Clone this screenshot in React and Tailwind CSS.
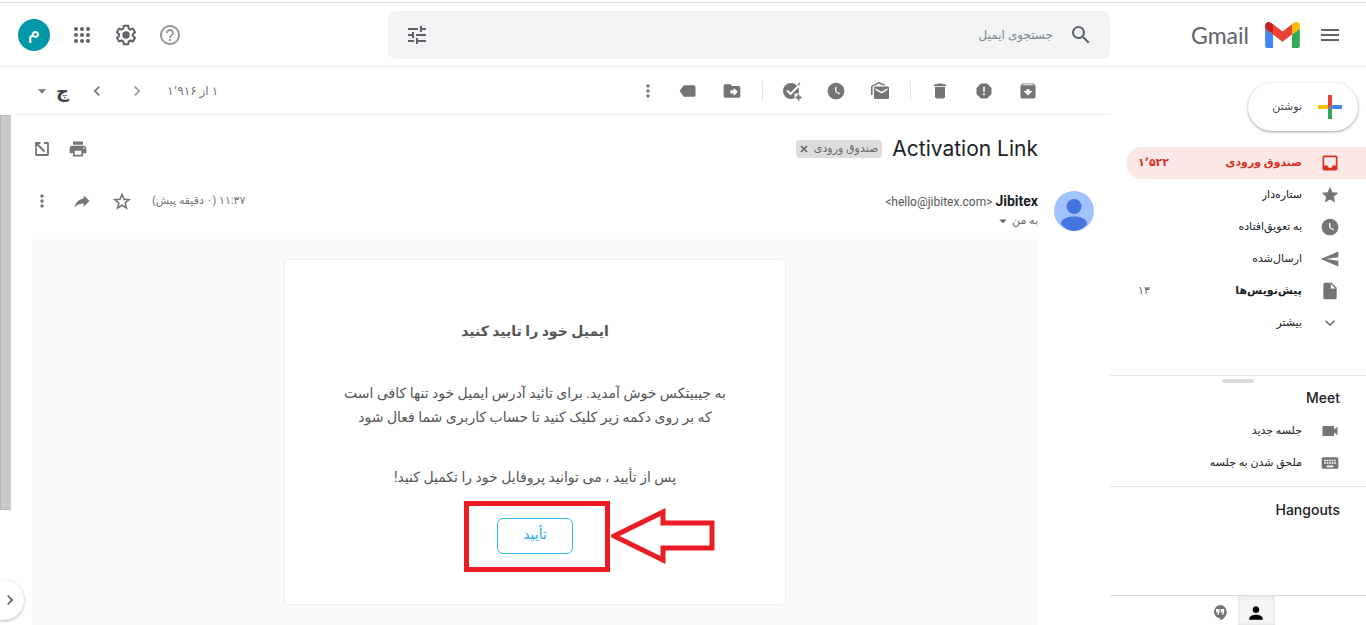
import { useState } from 'react'
import clsx from 'clsx'
import {
  MdArchive,
  MdArrowDropDown,
  MdChevronLeft,
  MdChevronRight,
  MdDelete,
  MdDriveFileMove,
  MdExpandMore,
  MdHelpOutline,
  MdInbox,
  MdInsertDriveFile,
  MdKeyboard,
  MdLabel,
  MdMenu,
  MdMoreVert,
  MdPerson,
  MdPrint,
  MdReply,
  MdReport,
  MdSearch,
  MdSend,
  MdStar,
  MdTune,
  MdVideocam,
  MdWatchLater,
} from 'react-icons/md'

const FOLDERS = [
  { id: 'inbox', icon: MdInbox, label: 'صندوق ورودی', count: '۱٬۵۲۲' },
  { id: 'starred', icon: MdStar, label: 'ستاره‌دار' },
  { id: 'snoozed', icon: MdWatchLater, label: 'به تعویق‌افتاده' },
  { id: 'sent', icon: MdSend, label: 'ارسال‌شده', flip: true },
  { id: 'drafts', icon: MdInsertDriveFile, label: 'پیش‌نویس‌ها', count: '۱۳', bold: true },
  { id: 'more', icon: MdExpandMore, label: 'بیشتر' },
]

const MEET_LINKS = [
  { icon: MdVideocam, label: 'جلسه جدید' },
  { icon: MdKeyboard, label: 'ملحق شدن به جلسه' },
]

const TOOL_GROUPS = [
  [
    { icon: MdArchive, label: 'بایگانی' },
    { icon: MdReport, label: 'گزارش هرزنامه' },
    { icon: MdDelete, label: 'حذف' },
  ],
  [
    { icon: UnreadIcon, label: 'خوانده‌نشده' },
    { icon: MdWatchLater, label: 'تعویق' },
    { icon: AddTaskIcon, label: 'افزودن به کارها' },
  ],
  [
    { icon: MdDriveFileMove, label: 'انتقال' },
    { icon: MdLabel, label: 'برچسب', flip: true },
  ],
]

function GmailMark() {
  return (
    <svg width="35" height="26" viewBox="52 42 88 66" aria-hidden="true">
      <path fill="#4285f4" d="M58 108h14V74L52 59v43c0 3.32 2.69 6 6 6" />
      <path fill="#34a853" d="M120 108h14c3.32 0 6-2.69 6-6V59l-20 15" />
      <path fill="#fbbc04" d="M120 48v26l20-15v-8c0-7.42-8.47-11.65-14.4-7.2" />
      <path fill="#ea4335" d="M72 74V48l24 18 24-18v26L96 92" />
      <path fill="#c5221f" d="M52 51v8l20 15V48l-5.6-4.2c-5.94-4.45-14.4-.22-14.4 7.2" />
    </svg>
  )
}

function GearIcon() {
  return (
    <svg width="24" height="24" viewBox="0 0 24 24" fill="currentColor" aria-hidden="true">
      <path d="M13.85 22.25h-3.7c-.74 0-1.36-.54-1.45-1.27l-.27-1.89c-.27-.14-.53-.29-.79-.46l-1.8.72c-.7.26-1.47-.03-1.81-.65L2.2 15.53c-.35-.66-.2-1.44.36-1.88l1.53-1.19c-.01-.15-.02-.3-.02-.46 0-.15.01-.31.02-.46l-1.52-1.19c-.59-.45-.74-1.26-.37-1.88l1.85-3.19c.34-.62 1.11-.9 1.79-.63l1.81.73c.26-.17.52-.32.78-.46l.27-1.91c.09-.7.71-1.25 1.44-1.25h3.7c.74 0 1.36.54 1.45 1.27l.27 1.89c.27.14.53.29.79.46l1.8-.72c.71-.26 1.48.03 1.82.65l1.84 3.18c.36.66.2 1.44-.36 1.88l-1.52 1.19c.01.15.02.3.02.46s-.01.31-.02.46l1.52 1.19c.56.45.72 1.23.37 1.86l-1.86 3.22c-.34.62-1.11.9-1.8.63l-1.8-.72c-.26.17-.52.32-.78.46l-.27 1.91c-.1.68-.72 1.22-1.46 1.22zm-3.23-2h2.76l.37-2.55.53-.22c.44-.18.88-.44 1.34-.78l.45-.34 2.38.96 1.38-2.4-2.03-1.58.07-.56c.03-.26.06-.51.06-.78s-.03-.53-.06-.78l-.07-.56 2.03-1.58-1.39-2.4-2.39.96-.45-.35c-.42-.32-.87-.58-1.33-.77l-.52-.22-.37-2.55h-2.76l-.37 2.55-.53.21c-.44.19-.88.44-1.34.79l-.45.33-2.38-.95-1.39 2.39 2.03 1.58-.07.56a7 7 0 0 0-.06.79c0 .26.02.53.06.78l.07.56-2.03 1.58 1.38 2.4 2.39-.96.45.35c.43.33.86.58 1.33.77l.53.22.38 2.55z" />
      <circle cx="12" cy="12" r="3.7" />
    </svg>
  )
}

function AppsIcon() {
  const stops = [6, 12, 18]
  return (
    <svg width="24" height="24" viewBox="0 0 24 24" fill="currentColor" aria-hidden="true">
      {stops.map(y => stops.map(x => <circle key={`${x}-${y}`} cx={x} cy={y} r="2" />))}
    </svg>
  )
}

function UnreadIcon({ size = 20 }) {
  return (
    <svg width={size} height={size} viewBox="0 0 20 20" fill="currentColor" aria-hidden="true">
      <path d="M1 14V5.6c0-.6.3-1 .9-1.200L9 1l7.500 3.200H12.500L9 2.700 2.600 5.400V14z" />
      <path
        fillRule="evenodd"
        d="M5.200 5.500h12.600c.7 0 1.200.5 1.200 1.200v10.100c0 .7-.5 1.200-1.200 1.200H5.200c-.7 0-1.200-.5-1.200-1.200V6.700c0-.7.5-1.200 1.200-1.200zM5.500 7.300V9l6 3.500 6-3.500V7.300l-6 3.500z"
      />
    </svg>
  )
}

function AddTaskIcon({ size = 20 }) {
  return (
    <svg width={size} height={size} viewBox="0 0 20 20" aria-hidden="true">
      <circle cx="9" cy="10" r="8" fill="currentColor" />
      <path d="M5 9.500l3.500 3.500L18 3.500" fill="none" stroke="white" strokeWidth="2" />
      <path d="M16 4l2-2" stroke="currentColor" strokeWidth="1.500" />
      <path d="M12.500 12.500H20V20h-7.500z" fill="white" />
      <path d="M16.500 13.500v6M13.500 16.500h6" stroke="currentColor" strokeWidth="1.800" />
    </svg>
  )
}

function PopOutIcon() {
  return (
    <svg width="20" height="20" viewBox="0 0 20 20" fill="none" stroke="currentColor" strokeWidth="1.800" aria-hidden="true">
      <path d="M4 9v6.500c0 .3.200.5.500.5h11c.3 0 .5-.2.500-.5v-11c0-.3-.2-.5-.5-.5H12" />
      <path d="M4 8.500V4h4.500M4.500 4.500l8 8" />
    </svg>
  )
}

function StarOutlineIcon() {
  return (
    <svg width="20" height="20" viewBox="0 0 20 20" fill="none" stroke="currentColor" strokeWidth="1.600" aria-hidden="true">
      <path d="M10 3.500l2 4.700 5.100.4-3.900 3.400 1.200 5-4.400-2.700L5.600 17l1.200-5-3.900-3.400 5.100-.4z" />
    </svg>
  )
}

function CloseIcon() {
  return (
    <svg width="8" height="8" viewBox="0 0 8 8" fill="none" stroke="currentColor" strokeWidth="1.600" aria-hidden="true">
      <path d="M1 1l6 6M7 1L1 7" />
    </svg>
  )
}

function ComposeIcon() {
  return (
    <svg width="36" height="36" viewBox="0 0 36 36" aria-hidden="true">
      <path fill="#34a853" d="M16 16v14h4V20z" />
      <path fill="#4285f4" d="M30 16H20l-4 4h14z" />
      <path fill="#fbbc05" d="M6 16v4h10l4-4z" />
      <path fill="#ea4335" d="M20 16V6h-4v14z" />
    </svg>
  )
}

function HangoutsIcon() {
  return (
    <svg width="16" height="18" viewBox="0 0 16 18" fill="currentColor" aria-hidden="true">
      <path
        fillRule="evenodd"
        d="M8 1a6.800 6.800 0 0 1 6.800 6.800c0 4-3 7-6.300 8.700v-2H8A6.800 6.800 0 0 1 8 1zM4 5v3.500h2.200L5 10.800h1.500l1-2.300V5zm4.700 0v3.500h2.200l-1.200 2.300h1.500l1-2.300V5z"
      />
    </svg>
  )
}

function SenderAvatar() {
  return (
    <svg className="shrink-0 rounded-full" width="40" height="40" viewBox="0 0 40 40" aria-hidden="true">
      <rect width="40" height="40" fill="#a0c3ff" />
      <circle cx="20" cy="15.500" r="7.500" fill="#4374e0" />
      <path fill="#4374e0" d="M7 33c0-5 6-7.500 13-7.500S33 28 33 33c-3 4-8 7-13 7S10 37 7 33z" />
    </svg>
  )
}

function IconButton({ label, className, children }) {
  return (
    <button type="button" aria-label={label} className={clsx('flex shrink-0 items-center justify-center', className)}>
      {children}
    </button>
  )
}

function Header() {
  return (
    <header className="mt-0.5 flex h-[65px] shrink-0 items-center border-y border-t-[#dadce0] border-b-[#ebebeb] text-[#5f6368]">
      <div className="flex w-64 shrink-0 items-center gap-[18px] ps-6">
        <IconButton label="منو">
          <MdMenu size={24} />
        </IconButton>
        <a href="#inbox" className="flex items-center gap-4 font-['Lato'] text-[23px] leading-8">
          <GmailMark />
          Gmail
        </a>
      </div>

      <form className="flex h-12 max-w-[722px] flex-1 items-center rounded-lg bg-[#f1f3f4] px-[17px]">
        <IconButton label="جستجو">
          <MdSearch size={24} />
        </IconButton>
        <input
          type="search"
          aria-label="جستجوی ایمیل"
          placeholder="جستجوی ایمیل"
          className="mx-4 min-w-0 flex-1 bg-transparent text-xs outline-none placeholder:text-[#80868b]"
        />
        <IconButton label="گزینه‌های جستجو">
          <MdTune size={24} />
        </IconButton>
      </form>

      <div className="ms-auto flex items-center gap-5 pe-[18px]">
        <IconButton label="راهنما" className="text-[#999999]">
          <MdHelpOutline size={24} />
        </IconButton>
        <IconButton label="تنظیمات">
          <GearIcon />
        </IconButton>
        <IconButton label="برنامه‌ها">
          <AppsIcon />
        </IconButton>
        <IconButton label="حساب" className="size-8 rounded-full bg-[#0097a7] pb-2 text-xl leading-5 text-white">
          م
        </IconButton>
      </div>
    </header>
  )
}

function FolderItem({ item, active, onSelect }) {
  return (
    <button
      type="button"
      onClick={() => onSelect(item.id)}
      className={clsx(
        'flex h-8 items-center rounded-e-full ps-[26px] pe-3 text-[11px]',
        active ? 'bg-[#fce8e6] font-bold text-[#d93025]' : 'text-[#202124]',
        item.bold && 'font-bold',
      )}
    >
      <item.icon
        size={20}
        className={clsx('me-[18px] shrink-0', !active && 'text-[#747474]', item.flip && '-scale-x-100')}
      />
      <span className="truncate">{item.label}</span>
      {item.count && <span className={clsx('ms-auto', !active && 'font-normal text-[#5f6368]')}>{item.count}</span>}
    </button>
  )
}

function Sidebar() {
  const [folder, setFolder] = useState('inbox')

  return (
    <aside className="flex w-64 shrink-0 flex-col">
      <div className="px-2 py-4">
        <button
          type="button"
          className="flex h-12 items-center gap-2.5 rounded-full ps-2.5 pe-6 text-[11px] text-[#3c4043] shadow-[0_1px_2px_rgba(60,64,67,0.3),0_1px_3px_1px_rgba(60,64,67,0.15)]"
        >
          <ComposeIcon />
          نوشتن
        </button>
      </div>

      <nav className="flex flex-1 flex-col pe-4">
        {FOLDERS.map(item => (
          <FolderItem key={item.id} item={item} active={item.id === folder} onSelect={setFolder} />
        ))}
      </nav>

      {/* Meet */}
      <section className="flex h-[111px] shrink-0 flex-col border-t border-[#e5e5e5] pt-[3px]">
        <div className="mx-auto h-1 w-8 shrink-0 rounded-full bg-[#dadce0]" />
        <h2 className="px-[26px] pt-[3px] pb-[5px] font-['Inter'] text-sm leading-6 font-medium text-[#202124]">Meet</h2>
        {MEET_LINKS.map(link => (
          <a key={link.label} href="#meet" className="flex h-8 shrink-0 items-center gap-[18px] px-[26px] text-[11px] text-[#202124]">
            <link.icon size={20} className="shrink-0 text-[#747474]" />
            {link.label}
          </a>
        ))}
      </section>

      {/* Hangouts */}
      <section className="h-[109px] shrink-0 border-t border-[#e5e5e5] pt-[11px]">
        <h2 className="px-[26px] font-['Inter'] text-sm leading-6 font-medium text-[#202124]">Hangouts</h2>
      </section>

      <div className="flex h-[30px] shrink-0 justify-center border-t border-[#dadce0]">
        <IconButton label="مخاطبین" className="w-[37px] bg-[#f5f5f5] pt-1 text-black shadow-[inset_0_0_4px_rgba(0,0,0,0.1)]">
          <MdPerson size={20} />
        </IconButton>
        <IconButton label="گفتگوها" className="w-9 pt-1 text-[#747474]">
          <HangoutsIcon />
        </IconButton>
      </div>
    </aside>
  )
}

function Toolbar() {
  return (
    <div className="me-4 flex h-12 shrink-0 items-center border-b border-[#ebebeb] ps-[60px] pe-4 text-[#747474]">
      {TOOL_GROUPS.map((group, i) => (
        <div key={i} className="flex items-center">
          {i > 0 && (
            <span className="flex w-4 justify-center">
              <span className="h-5 w-px bg-[#e5e5e5]" />
            </span>
          )}
          {group.map(tool => (
            <IconButton key={tool.label} label={tool.label} className="w-11">
              <tool.icon size={20} className={clsx(tool.flip && '-scale-x-100')} />
            </IconButton>
          ))}
        </div>
      ))}
      <IconButton label="بیشتر" className="w-9">
        <MdMoreVert size={20} />
      </IconButton>

      <div className="ms-auto flex items-center">
        <span className="me-2.5 text-xs">۱ از ۱٬۹۱۶</span>
        <IconButton label="جدیدتر" className="w-10 text-[#999999]">
          <MdChevronRight size={20} />
        </IconButton>
        <IconButton label="قدیمی‌تر" className="w-10">
          <MdChevronLeft size={20} />
        </IconButton>
        <IconButton label="ابزار ورودی" className="ms-2 h-5 gap-1 text-lg font-bold text-[#444444]">
          چ
          <MdArrowDropDown size={20} className="text-[#747474]" />
        </IconButton>
      </div>
    </div>
  )
}

function EmailCard() {
  return (
    <div className="mx-auto max-w-[502px] rounded border border-[#f0f0f0] bg-white px-8 pt-[59px] pb-[50px] text-center text-sm text-[#555555]">
      <h3 className="leading-6 font-bold">ایمیل خود را تایید کنید</h3>
      <p className="mt-[38px] leading-6">
        به جیبیتکس خوش آمدید. برای تائید آدرس ایمیل خود تنها کافی است
        <br />
        که بر روی دکمه زیر کلیک کنید تا حساب کاربری شما فعال شود
      </p>
      <p className="mt-9 leading-6">پس از تأیید ، می توانید پروفایل خود را تکمیل کنید!</p>

      <div className="relative mx-auto mt-[29px] w-[76px]">
        <button type="button" className="block h-9 w-full rounded-md border border-[#29b6f6] pb-1 text-[#29a9eb]">
          تأیید
        </button>
        {/* Callout frame and arrow around the button */}
        <div className="pointer-events-none absolute -top-[17px] -right-[37px] -bottom-[18px] -left-[33px] border-[5px] border-[#ed1c24]">
          <svg
            className="absolute top-0.5 left-full ml-1.5"
            width="106"
            height="56"
            viewBox="0 0 106 56"
            fill="none"
            stroke="#ed1c24"
            strokeWidth="5"
            aria-hidden="true"
          >
            <path d="M3 28 L52 4 V15 H101 V40 H52 V52 Z" />
          </svg>
        </div>
      </div>
    </div>
  )
}

function Message() {
  return (
    <article className="flex flex-1 flex-col ps-4 pe-8">
      <div className="flex h-[68px] shrink-0 items-center gap-2.5 ps-14 text-[#747474]">
        <h1 className="font-['Inter'] text-[21px] leading-7 text-[#202124]">Activation Link</h1>
        <span className="flex items-center gap-1.5 rounded bg-[#dddddd] px-1 text-[11px] leading-[18px] text-[#666666]">
          صندوق ورودی
          <button type="button" aria-label="حذف برچسب">
            <CloseIcon />
          </button>
        </span>
        <div className="ms-auto flex gap-4">
          <IconButton label="چاپ">
            <MdPrint size={20} />
          </IconButton>
          <IconButton label="باز کردن در پنجره جدید">
            <PopOutIcon />
          </IconButton>
        </div>
      </div>

      <div className="flex shrink-0 gap-4 pt-2 pb-2">
        <SenderAvatar />
        <div className="flex-1">
          <div className="flex h-5 items-center">
            <p dir="ltr" className="text-xs text-[#555555]">
              &lt;hello@jibitex.com&gt; <strong className="text-sm text-[#202124]">Jibitex</strong>
            </p>
            <div className="ms-auto flex items-center gap-5 text-[#747474]">
              <span className="text-[11px]">۱۱:۳۷ (۰ دقیقه پیش)</span>
              <IconButton label="ستاره">
                <StarOutlineIcon />
              </IconButton>
              <IconButton label="پاسخ">
                <MdReply size={20} className="-scale-x-100" />
              </IconButton>
              <IconButton label="بیشتر">
                <MdMoreVert size={20} />
              </IconButton>
            </div>
          </div>
          <button type="button" className="flex h-5 items-center text-[11px] text-[#666666]">
            به من
            <MdArrowDropDown size={18} />
          </button>
        </div>
      </div>

      <div className="ms-14 flex-1 bg-[#fafafa] py-5">
        <EmailCard />
      </div>
    </article>
  )
}

export default function App() {
  return (
    <div dir="rtl" className="relative flex h-screen flex-col overflow-hidden bg-white font-['Roboto','DejaVu_Sans',sans-serif]">
      <Header />
      <div className="flex min-h-0 flex-1">
        <Sidebar />
        <main className="flex min-w-0 flex-1 flex-col">
          <Toolbar />
          <div className="relative flex min-h-0 flex-1 overflow-hidden">
            <Message />
            {/* Scroll thumb */}
            <div className="absolute top-0 left-0 h-[395px] w-[11px] border-y border-l border-[#b8b8b8] bg-[#cacaca]" />
          </div>
        </main>
      </div>

      <button
        type="button"
        aria-label="نمایش پنل کناری"
        className="absolute bottom-[5px] left-0 flex h-10 w-6 items-center rounded-r-full bg-white ps-1 text-[#5f6368] shadow-[0_1px_3px_rgba(60,64,67,0.4)]"
      >
        <MdChevronRight size={20} />
      </button>
    </div>
  )
}
